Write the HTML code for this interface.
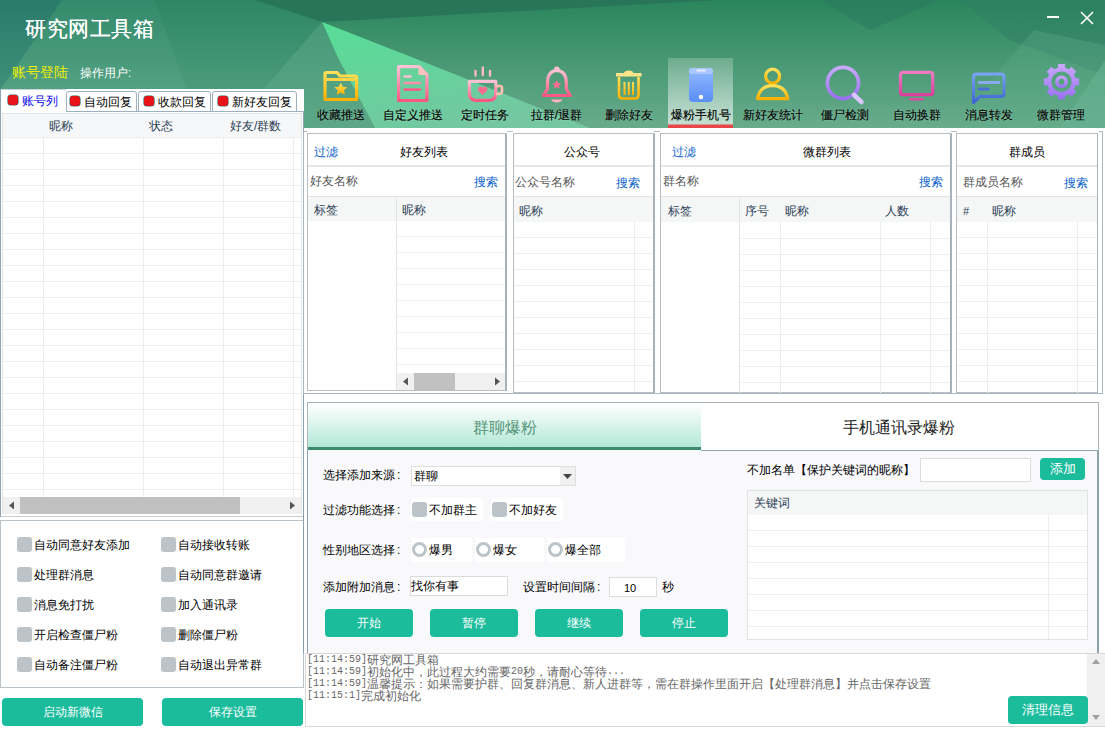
<!DOCTYPE html>
<html><head><meta charset="utf-8">
<style>
*{margin:0;padding:0;box-sizing:border-box}
html,body{width:1105px;height:740px;overflow:hidden;background:#fff;font-family:"Liberation Sans",sans-serif;font-size:12px;color:#000}
.a{position:absolute}
.t{position:absolute;white-space:nowrap;line-height:12px;font-size:12px}
.blue{color:#0b5fcb}
.hd{color:#2d4156}
.gray{color:#555}
.btn{position:absolute;background:#1abc9c;border-radius:4px;color:#fff;text-align:center;font-size:12px}
.cb{position:absolute;width:15px;height:15px;background:#bcc3c9;border-radius:3px}
.rad{position:absolute;width:15px;height:15px;border:3px solid #bcc3c9;border-radius:50%;background:#fff}
.rows{background-image:linear-gradient(#eeeeee 1px,transparent 1px);background-size:100% 16px}
.vl{position:absolute;width:1px;background:#ededed}
.m{font-family:"Liberation Mono",monospace;font-size:10px;line-height:12px;vertical-align:top}
.tb{position:absolute;margin-top:1px;text-shadow:0 0 2px rgba(220,255,235,0.55);text-align:center;font-size:12px;color:#000;-webkit-text-stroke:0.15px #000;line-height:12px;white-space:nowrap}
</style></head><body>

<!-- HEADER BACKGROUND -->
<svg class="a" style="left:0;top:0" width="1105" height="128" viewBox="0 0 1105 128">
<defs>
<linearGradient id="hg" x1="0" y1="0" x2="0" y2="1"><stop offset="0" stop-color="#2b8260"/><stop offset="1" stop-color="#67ab8c"/></linearGradient>
<linearGradient id="hA" x1="0" y1="0" x2="0" y2="1"><stop offset="0" stop-color="#2a7b6a"/><stop offset="1" stop-color="#3f8f7a"/></linearGradient>
<linearGradient id="hB" x1="0" y1="0" x2="0" y2="1"><stop offset="0" stop-color="#348a6c"/><stop offset="1" stop-color="#60ab8c"/></linearGradient>
<linearGradient id="hC" x1="0" y1="0" x2="0" y2="1"><stop offset="0" stop-color="#2e8664"/><stop offset="1" stop-color="#58a585"/></linearGradient>
<linearGradient id="br" x1="0" y1="0" x2="0.5" y2="1"><stop offset="0" stop-color="#56de96"/><stop offset="1" stop-color="#74c7a1"/></linearGradient>
<linearGradient id="hF" x1="0" y1="0" x2="0" y2="1"><stop offset="0" stop-color="#2a855c"/><stop offset="1" stop-color="#68ac8c"/></linearGradient>
</defs>
<rect width="1105" height="128" fill="url(#hg)"/>
<polygon points="62,0 155,0 200,128 0,128 0,90" fill="url(#hB)"/>
<polygon points="155,0 300,0 322,22 230,128 200,128" fill="url(#hC)"/>
<polygon points="0,0 62,0 0,90" fill="url(#hA)"/>
<polygon points="322,22 720,0 1105,0 1105,128 600,128 420,58" fill="url(#hF)"/>
<polygon points="255,0 720,0 322,22" fill="#28755a"/>
<polygon points="322,22 414,58 590,128 375,128 338,58" fill="url(#br)"/>
<polygon points="322,22 230,128 375,128 338,58" fill="#55a584" opacity="0.6"/>
<polygon points="960,0 1105,0 1105,75 1010,40" fill="#2f7d66" opacity="0.45"/>
<polygon points="820,0 940,0 870,30" fill="#2a7860" opacity="0.5"/>
<polygon points="1034,30 973,101 960,128 1105,128 1105,45" fill="#5eac8a" opacity="0.35"/>
<polygon points="1105,60 1060,128 1105,128" fill="#68b393" opacity="0.6"/>
</svg>

<div class="t" style="left:25px;top:18px;font-family:'Liberation Serif',serif;font-size:21px;line-height:22px;color:#fff;letter-spacing:0.5px;text-shadow:0.4px 0 0 #fff">研究网工具箱</div>
<div class="t" style="left:12px;top:65px;font-size:14px;line-height:14px;color:#f0f000">账号登陆</div>
<div class="t" style="left:80px;top:67px;font-size:12px;line-height:13px;color:#fff">操作用户:</div>

<!-- window buttons -->
<div class="a" style="left:1047px;top:16px;width:12px;height:2px;background:#fff"></div>
<svg class="a" style="left:1080px;top:11px" width="14" height="14" viewBox="0 0 14 14"><path d="M1 1L13 13M13 1L1 13" stroke="#fff" stroke-width="1.6"/></svg>

<!-- TOOLBAR -->
<svg class="a" style="left:0;top:0" width="1105" height="128" viewBox="0 0 1105 128">
<defs>
<linearGradient id="gy" x1="0" y1="0" x2="0" y2="1"><stop offset="0" stop-color="#ffe15a"/><stop offset="1" stop-color="#ffb000"/></linearGradient>
<linearGradient id="gp" x1="0" y1="0" x2="0" y2="1"><stop offset="0" stop-color="#ffc2d4"/><stop offset="1" stop-color="#ff5785"/></linearGradient>
<linearGradient id="gb" x1="0" y1="0" x2="0" y2="1"><stop offset="0" stop-color="#94b9ff"/><stop offset="1" stop-color="#5a8ff7"/></linearGradient>
<linearGradient id="gv" x1="0" y1="0" x2="0" y2="1"><stop offset="0" stop-color="#c9a8ff"/><stop offset="1" stop-color="#9a70f2"/></linearGradient>
<linearGradient id="gm" x1="0" y1="0" x2="0" y2="1"><stop offset="0" stop-color="#f07ac0"/><stop offset="1" stop-color="#de3f9c"/></linearGradient>
<linearGradient id="gc" x1="0" y1="0" x2="0" y2="1"><stop offset="0" stop-color="#7aa2f0"/><stop offset="1" stop-color="#3f66d0"/></linearGradient>
<linearGradient id="sel" x1="0" y1="0" x2="0" y2="1"><stop offset="0" stop-color="#ffffff" stop-opacity="0.2"/><stop offset="1" stop-color="#ffffff" stop-opacity="0.62"/></linearGradient>
</defs>
<!-- selected highlight -->
<rect x="668" y="58" width="65" height="67" fill="url(#sel)"/>
<rect x="668" y="124.5" width="65" height="3.5" fill="#e8474a"/>
<!-- 1 folder -->
<g fill="none" stroke="url(#gy)" stroke-width="3.2" stroke-linejoin="round">
<path d="M325 87 V74 Q325 72.5 326.5 72.5 H337 L340 76 H355 Q356.6 76 356.6 77.6 V99.5 H325 Z M325 79.5 H356.6"/>
</g>
<path d="M340.8 82.5 l2 4.2 4.5 .5 -3.3 3.1 .9 4.5 -4.1 -2.3 -4.1 2.3 .9 -4.5 -3.3 -3.1 4.5 -.5z" fill="url(#gy)"/>
<!-- 2 document -->
<g fill="none" stroke="url(#gp)" stroke-width="3.2" stroke-linejoin="round">
<path d="M398.6 66.6 H419 L426.9 74.5 V100.5 H398.6 Z"/>
</g>
<path d="M418.5 66 V75 H427.5 Z" fill="#ffc3bd"/>
<g stroke="url(#gp)" stroke-width="2.4" stroke-linecap="round"><path d="M404.5 76.5 H410.5 M404.5 83 H420 M404.5 89.5 H420"/></g>
<!-- 3 cup -->
<g fill="none" stroke="url(#gp)" stroke-width="3.2" stroke-linejoin="round">
<path d="M469.4 81.3 H495.8 V93 Q495.8 100.4 488.4 100.4 H476.8 Q469.4 100.4 469.4 93 Z"/>
<path d="M496 86 H500 Q502 86 502 88 V91 Q502 94 499 94 H496" stroke="#ffc0b0" stroke-width="2.6"/>
</g>
<g stroke="#ffb8c8" stroke-width="2.4" stroke-linecap="round"><path d="M475.5 71 V75.5 M482.8 67.5 V75 M490 71 V75.5"/></g>
<path d="M482.6 95 l-4.2-4.2 a2.3 2.3 0 0 1 4.2-3 a2.3 2.3 0 0 1 4.2 3z" fill="#ff6a92"/>
<!-- 4 bell -->
<g fill="none" stroke="url(#gp)" stroke-width="3.2" stroke-linejoin="round">
<path d="M556.8 70.5 Q548 71 547.5 82 V89 L543.5 95.5 H570.3 L566.3 89 V82 Q565.8 71 556.8 70.5 Z"/>
</g>
<circle cx="556.8" cy="69.2" r="2.8" fill="#ffc0d0"/>
<path d="M551 99.5 H562.6 Q561 102.5 556.8 102.5 Q552.6 102.5 551 99.5Z" fill="#ffb0c4"/>
<path d="M556.8 80 l1.4 2.9 3.1 .4 -2.3 2.1 .6 3.1 -2.8 -1.6 -2.8 1.6 .6 -3.1 -2.3 -2.1 3.1 -.4z" fill="#ff6a92"/>
<!-- 5 trash -->
<path d="M616 73 H641.5 V76.5 H616 Z M624 73 Q624.5 70.5 628.8 70.5 Q633 70.5 633.5 73Z" fill="#ffe58a"/>
<g fill="none" stroke="url(#gy)" stroke-width="2.6" stroke-linejoin="round"><path d="M619 77 V95 Q619 98.5 622.5 98.5 H635 Q638.5 98.5 638.5 95 V77"/></g>
<g stroke="url(#gy)" stroke-width="2" ><path d="M624.5 82 V95 M628.8 82 V95 M633 82 V95"/></g>
<!-- 6 phone -->
<rect x="689" y="68" width="24" height="34" rx="4" fill="url(#gb)"/>
<rect x="689" y="68" width="24" height="6" rx="3" fill="#a9c6ff"/>
<rect x="696.5" y="69.5" width="9" height="2" fill="#eaf1ff"/>
<circle cx="701" cy="97" r="2.2" fill="#fff"/>
<!-- 7 person -->
<g fill="none" stroke="url(#gy)" stroke-width="3.2" stroke-linejoin="round">
<circle cx="772.6" cy="76.2" r="7"/>
<path d="M757.5 98.6 Q760 85.7 772.6 85.7 Q785.2 85.7 787.7 98.6 Z"/>
</g>
<!-- 8 magnifier -->
<circle cx="843" cy="83" r="15.6" fill="none" stroke="url(#gv)" stroke-width="3.6"/>
<path d="M854 95 L861.5 102" stroke="#d9c6ff" stroke-width="4.5" stroke-linecap="round"/>
<!-- 9 monitor -->
<rect x="900.5" y="72.3" width="32.2" height="22.4" rx="2.5" fill="none" stroke="url(#gm)" stroke-width="3.2"/>
<rect x="909" y="98" width="15" height="2.6" rx="1.3" fill="#e04aa4"/>
<!-- 10 chat -->
<path d="M976.5 74.2 H1001 Q1004 74.2 1004 77.2 V93.4 Q1004 96.4 1001 96.4 H980 L973.5 102.5 V77.2 Q973.5 74.2 976.5 74.2 Z" fill="none" stroke="url(#gc)" stroke-width="3.2" stroke-linejoin="round"/>
<g stroke-linecap="round" stroke-width="2.8"><path d="M979 82.5 H999" stroke="#8aaaf0"/><path d="M979 89 H988.5" stroke="#4a70d8"/></g>
<!-- 11 gear -->
<path d="M1065.01 95.77 L1064.93 99.37 L1058.07 99.37 L1057.99 95.77 L1054.03 94.13 L1051.43 96.62 L1046.58 91.77 L1049.07 89.17 L1047.43 85.21 L1043.83 85.13 L1043.83 78.27 L1047.43 78.19 L1049.07 74.23 L1046.58 71.63 L1051.43 66.78 L1054.03 69.27 L1057.99 67.63 L1058.07 64.03 L1064.93 64.03 L1065.01 67.63 L1068.97 69.27 L1071.57 66.78 L1076.42 71.63 L1073.93 74.23 L1075.57 78.19 L1079.17 78.27 L1079.17 85.13 L1075.57 85.21 L1073.93 89.17 L1076.42 91.77 L1071.57 96.62 L1068.97 94.13Z M1051.30 81.70 a10.20 10.20 0 1 0 20.40 0 a10.20 10.20 0 1 0 -20.40 0Z" fill="url(#gv)" fill-rule="evenodd"/>
<path d="M1055.20 81.70 a6.30 6.30 0 1 0 12.60 0 a6.30 6.30 0 1 0 -12.60 0Z M1058.60 81.70 a2.90 2.90 0 1 0 5.80 0 a2.90 2.90 0 1 0 -5.80 0Z" fill="url(#gv)" fill-rule="evenodd"/>
</svg>
<div class="tb" style="left:310px;top:108px;width:61px">收藏推送</div>
<div class="tb" style="left:376px;top:108px;width:73px">自定义推送</div>
<div class="tb" style="left:454px;top:108px;width:61px">定时任务</div>
<div class="tb" style="left:521px;top:108px;width:71px">拉群/退群</div>
<div class="tb" style="left:598px;top:108px;width:61px">删除好友</div>
<div class="tb" style="left:664px;top:108px;width:73px">爆粉手机号</div>
<div class="tb" style="left:736px;top:108px;width:73px">新好友统计</div>
<div class="tb" style="left:814px;top:108px;width:61px">僵尸检测</div>
<div class="tb" style="left:886px;top:108px;width:61px">自动换群</div>
<div class="tb" style="left:958px;top:108px;width:61px">消息转发</div>
<div class="tb" style="left:1030px;top:108px;width:61px">微群管理</div>


<!-- LEFT PANEL -->
<!-- tab control white panel -->
<div class="a" style="left:0;top:89px;width:304px;height:428px;background:#fff"></div>
<div class="a" style="left:303px;top:111.5px;width:1px;height:405px;background:#8ea3b3"></div>
<div class="a" style="left:0;top:516px;width:304px;height:1px;background:#c5ccd2"></div>
<div class="a" style="left:0;top:89px;width:1px;height:428px;background:#8ea3b3"></div>
<!-- tabs -->
<div class="a" style="left:1px;top:89px;width:66px;height:24px;background:#fff;border-top:1px solid #c9d3da;border-radius:0 2px 0 0"></div>
<div class="a" style="left:66px;top:91px;width:71px;height:21px;background:#fff;border:1px solid #9eb0bd;border-radius:3px 3px 0 0"></div>
<div class="a" style="left:138px;top:91px;width:73px;height:21px;background:#fff;border:1px solid #9eb0bd;border-radius:3px 3px 0 0"></div>
<div class="a" style="left:212px;top:91px;width:85px;height:21px;background:#fff;border:1px solid #9eb0bd;border-radius:3px 3px 0 0"></div>
<div class="a" style="left:66px;top:111px;width:238px;height:1px;background:#9eb0bd"></div>
<div class="a" style="left:8px;top:95px;width:10px;height:10px;border-radius:3px;background:#e8141a;box-shadow:0 0 0 0.6px #2f6f70"></div>
<div class="t" style="left:22px;top:95px;color:#0000f0;font-size:12px">账号列</div>
<div class="a" style="left:70px;top:96px;width:10px;height:10px;border-radius:3px;background:#e8141a;box-shadow:0 0 0 0.6px #2f6f70"></div>
<div class="t" style="left:84px;top:96px;font-size:12px">自动回复</div>
<div class="a" style="left:144px;top:96px;width:10px;height:10px;border-radius:3px;background:#e8141a;box-shadow:0 0 0 0.6px #2f6f70"></div>
<div class="t" style="left:158px;top:96px;font-size:12px">收款回复</div>
<div class="a" style="left:218px;top:96px;width:10px;height:10px;border-radius:3px;background:#e8141a;box-shadow:0 0 0 0.6px #2f6f70"></div>
<div class="t" style="left:232px;top:96px;font-size:12px">新好友回复</div>
<!-- account table -->
<div class="a" style="left:2px;top:113px;width:300px;height:401px;border:1px solid #e2e6e9;border-bottom:none;background:#fff"></div>
<div class="a" style="left:3px;top:113.5px;width:298px;height:24px;background:#f5f7f8"></div>
<div class="t hd" style="left:49px;top:120px">昵称</div>
<div class="t hd" style="left:149px;top:120px">状态</div>
<div class="t hd" style="left:230px;top:120px">好友/群数</div>
<div class="a rows" style="left:3px;top:137px;width:298px;height:360px"></div>
<div class="vl" style="left:43px;top:137px;height:360px"></div>
<div class="vl" style="left:143px;top:137px;height:360px"></div>
<div class="vl" style="left:223px;top:137px;height:360px"></div>
<div class="vl" style="left:293px;top:137px;height:360px"></div>
<!-- h scrollbar -->
<div class="a" style="left:3px;top:497px;width:298px;height:17px;background:#f0f0f0"></div>
<div class="a" style="left:20px;top:497px;width:220px;height:17px;background:#c1c1c1"></div>
<svg class="a" style="left:8px;top:501px" width="8" height="9"><path d="M6 0.5V8.5L1 4.5Z" fill="#555"/></svg>
<svg class="a" style="left:288px;top:501px" width="8" height="9"><path d="M2 0.5V8.5L7 4.5Z" fill="#555"/></svg>
<!-- checkbox panel -->
<div class="a" style="left:0;top:520px;width:304px;height:168px;border:1px solid #b9c2c8;background:#fff"></div>
<div class="cb" style="left:17px;top:537px"></div><div class="t" style="left:34px;top:539px">自动同意好友添加</div>
<div class="cb" style="left:161px;top:537px"></div><div class="t" style="left:178px;top:539px">自动接收转账</div>
<div class="cb" style="left:17px;top:567px"></div><div class="t" style="left:34px;top:569px">处理群消息</div>
<div class="cb" style="left:161px;top:567px"></div><div class="t" style="left:178px;top:569px">自动同意群邀请</div>
<div class="cb" style="left:17px;top:597px"></div><div class="t" style="left:34px;top:599px">消息免打扰</div>
<div class="cb" style="left:161px;top:597px"></div><div class="t" style="left:178px;top:599px">加入通讯录</div>
<div class="cb" style="left:17px;top:627px"></div><div class="t" style="left:34px;top:629px">开启检查僵尸粉</div>
<div class="cb" style="left:161px;top:627px"></div><div class="t" style="left:178px;top:629px">删除僵尸粉</div>
<div class="cb" style="left:17px;top:657px"></div><div class="t" style="left:34px;top:659px">自动备注僵尸粉</div>
<div class="cb" style="left:161px;top:657px"></div><div class="t" style="left:178px;top:659px">自动退出异常群</div>
<div class="btn" style="left:2px;top:698px;width:141px;height:28px;line-height:28px">启动新微信</div>
<div class="btn" style="left:162px;top:698px;width:141px;height:28px;line-height:28px">保存设置</div>


<!-- MIDDLE PANELS -->
<!-- outer frame -->
<div class="a" style="left:303px;top:131px;width:1px;height:263px;background:#aab5bf"></div>
<div class="a" style="left:303px;top:131px;width:4px;height:1px;background:#aab5bf"></div>
<div class="a" style="left:303px;top:393px;width:800px;height:1px;background:#aab5bf"></div>
<div class="a" style="left:1102px;top:131px;width:1px;height:263px;background:#aab5bf"></div>
<div class="a" style="left:1099px;top:131px;width:4px;height:1px;background:#aab5bf"></div>
<div class="a" style="left:507px;top:131px;width:6px;height:1px;background:#b8bfc4"></div>
<div class="a" style="left:654px;top:131px;width:6px;height:1px;background:#b8bfc4"></div>
<div class="a" style="left:951px;top:131px;width:6px;height:1px;background:#b8bfc4"></div>

<!-- panel 1 friends -->
<div class="a" style="left:307px;top:133px;width:200px;height:258px;border:1px solid #b8c0c6;background:#fff"></div>
<div class="a" style="left:308px;top:165px;width:198px;height:2px;background:#e6e6e6"></div>
<div class="a" style="left:308px;top:196px;width:198px;height:1px;background:#e4e4e4"></div>
<div class="t blue" style="left:314px;top:146px">过滤</div>
<div class="t" style="left:400px;top:146px">好友列表</div>
<div class="t gray" style="left:310px;top:175px">好友名称</div>
<div class="t blue" style="left:474px;top:176px">搜索</div>
<div class="a" style="left:308px;top:197px;width:197px;height:24px;background:#f5f7f7"></div>
<div class="t hd" style="left:314px;top:204px">标签</div>
<div class="t hd" style="left:402px;top:204px">昵称</div>
<div class="vl" style="left:396px;top:197px;height:193px;background:#e3e3e3"></div>
<div class="a rows" style="left:397px;top:236px;width:108px;height:137px"></div>
<div class="a" style="left:397px;top:373px;width:108px;height:17px;background:#f0f0f0"></div>
<div class="a" style="left:414px;top:373px;width:41px;height:17px;background:#c1c1c1"></div>
<svg class="a" style="left:402px;top:377px" width="8" height="9"><path d="M6 0.5V8.5L1 4.5Z" fill="#555"/></svg>
<svg class="a" style="left:493px;top:377px" width="8" height="9"><path d="M2 0.5V8.5L7 4.5Z" fill="#555"/></svg>
<div class="a" style="left:505px;top:134px;width:1.5px;height:257px;background:#a9b2b9"></div>

<!-- panel 2 official accounts -->
<div class="a" style="left:513px;top:133px;width:142px;height:260px;border:1px solid #b8c0c6;background:#fff"></div>
<div class="a" style="left:514px;top:165px;width:140px;height:2px;background:#e6e6e6"></div>
<div class="a" style="left:514px;top:196px;width:140px;height:1px;background:#e4e4e4"></div>
<div class="t" style="left:564px;top:146px">公众号</div>
<div class="t gray" style="left:515px;top:176px">公众号名称</div>
<div class="t blue" style="left:616px;top:177px">搜索</div>
<div class="a" style="left:514px;top:197px;width:140px;height:25px;background:#f5f7f7"></div>
<div class="t hd" style="left:519px;top:205px">昵称</div>
<div class="a rows" style="left:514px;top:237px;width:140px;height:155px"></div>
<div class="vl" style="left:634px;top:222px;height:170px"></div>
<div class="a" style="left:653px;top:134px;width:1.5px;height:259px;background:#a9b2b9"></div>

<!-- panel 3 groups -->
<div class="a" style="left:660px;top:133px;width:292px;height:260px;border:1px solid #b8c0c6;background:#fff"></div>
<div class="a" style="left:661px;top:165px;width:290px;height:2px;background:#e6e6e6"></div>
<div class="a" style="left:661px;top:196px;width:290px;height:1px;background:#e4e4e4"></div>
<div class="t blue" style="left:672px;top:146px">过滤</div>
<div class="t" style="left:803px;top:146px">微群列表</div>
<div class="t gray" style="left:663px;top:175px">群名称</div>
<div class="t blue" style="left:919px;top:176px">搜索</div>
<div class="a" style="left:661px;top:197px;width:290px;height:25px;background:#f5f7f7"></div>
<div class="t hd" style="left:668px;top:205px">标签</div>
<div class="t hd" style="left:745px;top:205px">序号</div>
<div class="t hd" style="left:785px;top:205px">昵称</div>
<div class="t hd" style="left:885px;top:205px">人数</div>
<div class="vl" style="left:739px;top:197px;height:196px;background:#e3e3e3"></div>
<div class="a rows" style="left:740px;top:238px;width:211px;height:155px"></div>
<div class="vl" style="left:780px;top:222px;height:171px"></div>
<div class="vl" style="left:880px;top:222px;height:171px"></div>
<div class="vl" style="left:930px;top:222px;height:171px"></div>
<div class="a" style="left:950px;top:134px;width:1.5px;height:259px;background:#a9b2b9"></div>

<!-- panel 4 members -->
<div class="a" style="left:956px;top:133px;width:142px;height:260px;border:1px solid #b8c0c6;background:#fff"></div>
<div class="a" style="left:957px;top:165px;width:140px;height:2px;background:#e6e6e6"></div>
<div class="a" style="left:957px;top:196px;width:140px;height:1px;background:#e4e4e4"></div>
<div class="t" style="left:1009px;top:146px">群成员</div>
<div class="t gray" style="left:963px;top:176px">群成员名称</div>
<div class="t blue" style="left:1064px;top:177px">搜索</div>
<div class="a" style="left:957px;top:197px;width:140px;height:25px;background:#f5f7f7"></div>
<div class="t hd" style="left:963px;top:205px;font-size:11px">#</div>
<div class="t hd" style="left:992px;top:205px">昵称</div>
<div class="a rows" style="left:957px;top:237px;width:140px;height:155px"></div>
<div class="vl" style="left:987px;top:222px;height:171px"></div>
<div class="vl" style="left:1077px;top:222px;height:171px"></div>
<div class="a" style="left:1096.5px;top:134px;width:1.5px;height:259px;background:#a9b2b9"></div>


<!-- BOTTOM TABS -->
<!-- bottom area left border -->
<div class="a" style="left:303px;top:395px;width:1px;height:258px;background:#86a0b2"></div>
<!-- tab control -->
<div class="a" style="left:307px;top:402px;width:792px;height:251px;border:1px solid #a9b4bc;border-bottom:none;background:#fff"></div>
<div class="a" style="left:308px;top:406px;width:393px;height:41px;background:linear-gradient(#fbfefd,#b3e8d7)"></div>
<div class="a" style="left:308px;top:447px;width:393px;height:3px;background:#3d8a6d"></div>
<div class="a" style="left:701px;top:450px;width:397px;height:1px;background:#93a6b4"></div>
<div class="t" style="left:473px;top:420px;font-size:16px;line-height:16px;color:#559679">群聊爆粉</div>
<div class="t" style="left:843px;top:420px;font-size:16px;line-height:16px;color:#222">手机通讯录爆粉</div>
<div class="a" style="left:308px;top:450px;width:789.5px;height:203px;background:#f9f9fc"></div>
<div class="a" style="left:701px;top:450px;width:397px;height:1px;background:#93a6b4"></div>
<div class="a" style="left:1097px;top:451px;width:1.5px;height:202px;background:#8ba1b0"></div>
<div class="a" style="left:307px;top:450px;width:1px;height:203px;background:#8ba1b0"></div>

<!-- form -->
<div class="t" style="left:323px;top:469px">选择添加来源<span style="display:inline-block;width:12px;text-align:left;padding-left:2px">:</span></div>
<div class="a" style="left:411px;top:466px;width:165px;height:20px;background:#fff;border:1px solid #dedede"></div>
<div class="t" style="left:414px;top:470px">群聊</div>
<div class="a" style="left:560px;top:467px;width:15px;height:18px;background:#f0f0f0"></div>
<svg class="a" style="left:563px;top:474px" width="9" height="5"><path d="M0 0H9L4.5 5Z" fill="#444"/></svg>

<div class="t" style="left:323px;top:504px">过滤功能选择<span style="display:inline-block;width:12px;text-align:left;padding-left:2px">:</span></div>
<div class="a" style="left:411px;top:498px;width:72px;height:23px;background:#fff"></div>
<div class="a" style="left:491px;top:498px;width:72px;height:23px;background:#fff"></div>
<div class="cb" style="left:412px;top:502px"></div><div class="t" style="left:429px;top:504px">不加群主</div>
<div class="cb" style="left:492px;top:502px"></div><div class="t" style="left:509px;top:504px">不加好友</div>

<div class="t" style="left:323px;top:544px">性别地区选择<span style="display:inline-block;width:12px;text-align:left;padding-left:2px">:</span></div>
<div class="a" style="left:411px;top:538px;width:61px;height:24px;background:#fff"></div>
<div class="a" style="left:475px;top:538px;width:69px;height:24px;background:#fff"></div>
<div class="a" style="left:547px;top:538px;width:78px;height:24px;background:#fff"></div>
<div class="rad" style="left:412px;top:542px"></div><div class="t" style="left:429px;top:544px">爆男</div>
<div class="rad" style="left:476px;top:542px"></div><div class="t" style="left:493px;top:544px">爆女</div>
<div class="rad" style="left:548px;top:542px"></div><div class="t" style="left:565px;top:544px">爆全部</div>

<div class="t" style="left:323px;top:581px">添加附加消息<span style="display:inline-block;width:12px;text-align:left;padding-left:2px">:</span></div>
<div class="a" style="left:410px;top:576px;width:98px;height:20px;background:#fff;border:1px solid #dcdcdc"></div>
<div class="t" style="left:411px;top:580px">找你有事</div>
<div class="t" style="left:523px;top:581px">设置时间间隔<span style="display:inline-block;width:12px;text-align:left;padding-left:2px">:</span></div>
<div class="a" style="left:609px;top:577px;width:48px;height:20px;background:#fff;border:1px solid #dcdcdc"></div>
<div class="t" style="left:624px;top:582px;font-size:11px">10</div>
<div class="t" style="left:662px;top:581px">秒</div>

<div class="btn" style="left:325px;top:609px;width:88px;height:28px;line-height:28px">开始</div>
<div class="btn" style="left:430px;top:609px;width:88px;height:28px;line-height:28px">暂停</div>
<div class="btn" style="left:535px;top:609px;width:88px;height:28px;line-height:28px">继续</div>
<div class="btn" style="left:640px;top:609px;width:88px;height:28px;line-height:28px">停止</div>

<!-- keyword side -->
<div class="t" style="left:747px;top:464px">不加名单【保护关键词的昵称】</div>
<div class="a" style="left:920px;top:458px;width:111px;height:24px;background:#fff;border:1px solid #dcdcdc"></div>
<div class="btn" style="left:1040px;top:458px;width:45px;height:22px;line-height:22px;font-size:13px">添加</div>
<div class="a" style="left:747px;top:490px;width:341px;height:150px;border:1px solid #e0e3e6;background:#fff"></div>
<div class="a" style="left:748px;top:491px;width:339px;height:24px;background:#f5f7f7"></div>
<div class="t hd" style="left:754px;top:497px">关键词</div>
<div class="a rows" style="left:748px;top:530px;width:339px;height:109px"></div>
<div class="vl" style="left:1048px;top:515px;height:124px"></div>

<!-- log -->
<div class="a" style="left:305px;top:653px;width:800px;height:74px;border:1px solid #d8d8d8;border-right:none;background:#fff"></div>
<div class="a" style="left:1087px;top:654px;width:18px;height:72px;background:#f0f0f0"></div>
<svg class="a" style="left:1091.5px;top:659px" width="8" height="5"><path d="M0 5H8L4 0Z" fill="#a0a0a0"/></svg>
<svg class="a" style="left:1091.5px;top:714.5px" width="8" height="5"><path d="M0 0H8L4 5Z" fill="#a0a0a0"/></svg>
<div class="t" style="left:307px;top:654px;color:#666"><span class="m">[11:14:59]</span>研究网工具箱</div>
<div class="t" style="left:307px;top:666px;color:#666"><span class="m">[11:14:59]</span>初始化中，此过程大约需要<span class="m">20</span>秒，请耐心等待<span class="m">...</span></div>
<div class="t" style="left:307px;top:678px;color:#666"><span class="m">[11:14:59]</span>温馨提示：如果需要护群、回复群消息、新人进群等，需在群操作里面开启【处理群消息】并点击保存设置</div>
<div class="t" style="left:307px;top:690px;color:#666"><span class="m">[11:15:1]</span>完成初始化</div>
<div class="btn" style="left:1008px;top:696px;width:80px;height:28px;line-height:28px;font-size:13px">清理信息</div>


</body></html>
